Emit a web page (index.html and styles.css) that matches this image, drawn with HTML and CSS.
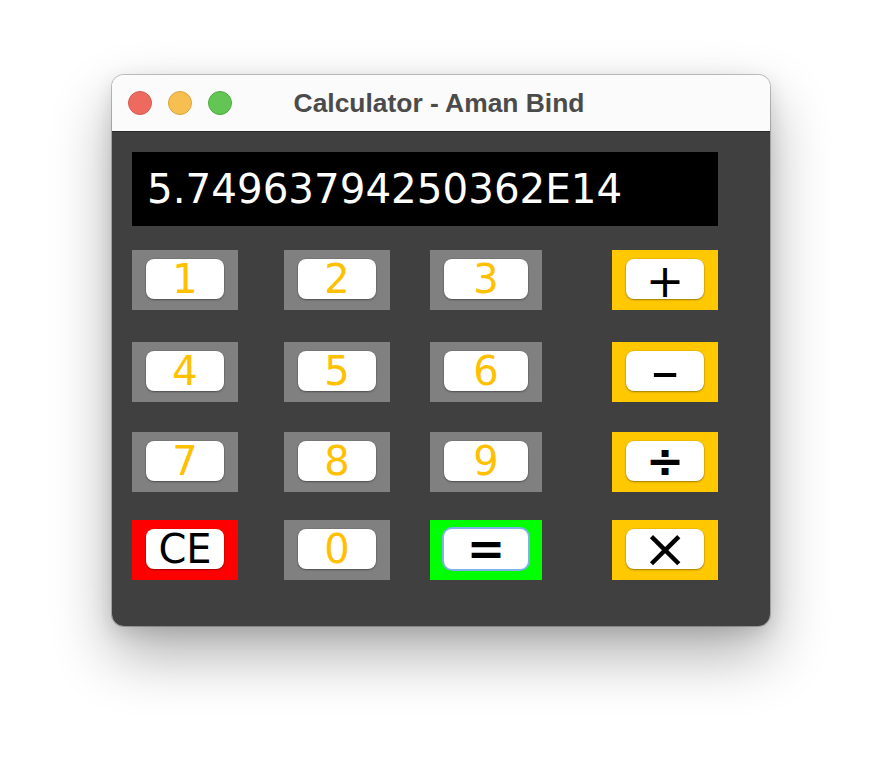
FILE: index.html
```html
<!DOCTYPE html>
<html lang="en">
<head>
<meta charset="utf-8">
<title>Calculator - Aman Bind</title>
<link rel="stylesheet" href="styles.css">
</head>
<body>
<div class="window">
  <div class="titlebar">
    <div class="lights">
      <span class="light red"></span>
      <span class="light yellow"></span>
      <span class="light green"></span>
    </div>
    <div class="title">Calculator - Aman Bind</div>
  </div>
  <div class="content">
    <div class="display">5.74963794250362E14</div>
    <div class="keypad">
      <div class="key gray r1 c1"><button class="btn num">1</button></div>
      <div class="key gray r1 c2"><button class="btn num">2</button></div>
      <div class="key gray r1 c3"><button class="btn num">3</button></div>
      <div class="key orange r1 c4"><button class="btn op plus">+</button></div>

      <div class="key gray r2 c1"><button class="btn num">4</button></div>
      <div class="key gray r2 c2"><button class="btn num">5</button></div>
      <div class="key gray r2 c3"><button class="btn num">6</button></div>
      <div class="key orange r2 c4"><button class="btn op"><span class="minus">-</span></button></div>

      <div class="key gray r3 c1"><button class="btn num">7</button></div>
      <div class="key gray r3 c2"><button class="btn num">8</button></div>
      <div class="key gray r3 c3"><button class="btn num">9</button></div>
      <div class="key orange r3 c4"><button class="btn op divide">÷</button></div>

      <div class="key red r4 c1"><button class="btn op ce">CE</button></div>
      <div class="key gray r4 c2"><button class="btn num">0</button></div>
      <div class="key lime r4 c3"><button class="btn op equals focus">=</button></div>
      <div class="key orange r4 c4"><button class="btn op times">×</button></div>
    </div>
  </div>
</div>
</body>
</html>
```

FILE: styles.css
```css
html, body {
  margin: 0;
  padding: 0;
  background: #ffffff;
}

body {
  width: 882px;
  height: 774px;
  overflow: hidden;
  padding-top: 75px;
  box-sizing: border-box;
}

.window {
  width: 658px;
  height: 551px;
  margin: 0 auto;
  border-radius: 12px;
  overflow: hidden;
  display: flex;
  flex-direction: column;
  box-shadow: 0 0 0 1px rgba(0, 0, 0, 0.22), 0 28px 60px rgba(0, 0, 0, 0.32), 0 6px 20px rgba(0, 0, 0, 0.12);
}

.titlebar {
  height: 56px;
  background: #fbfbfb;
  border-bottom: 1px solid #2a2a2a;
  display: flex;
  align-items: center;
  position: relative;
  flex: none;
}

.lights {
  display: flex;
  gap: 16px;
  padding-left: 16px;
}

.light {
  width: 24px;
  height: 24px;
  border-radius: 50%;
  box-sizing: border-box;
}

.light.red { background: #ee6a5f; border: 1px solid #d65a50; }
.light.yellow { background: #f6bf4f; border: 1px solid #d9a43e; }
.light.green { background: #62c554; border: 1px solid #52a944; }

.title {
  position: absolute;
  left: 0;
  right: 0;
  top: 0;
  bottom: 0;
  display: flex;
  align-items: center;
  justify-content: center;
  padding-right: 4px;
  font-family: "Liberation Sans", Arial, sans-serif;
  font-weight: bold;
  font-size: 26.4px;
  color: #4b4b4b;
  pointer-events: none;
}

.content {
  flex: 1;
  background: #404040;
  padding: 20px 0 0 20px;
}

.display {
  width: 586px;
  height: 74px;
  background: #000000;
  color: #ffffff;
  font-family: "DejaVu Sans", sans-serif;
  font-size: 40.4px;
  line-height: 74px;
  padding-left: 15px;
  box-sizing: border-box;
  white-space: nowrap;
}

.keypad {
  margin-top: 24px;
  display: grid;
  grid-template-columns: 106px 46px 106px 40px 112px 70px 106px;
  grid-template-rows: 60px 32px 60px 30px 60px 28px 60px;
}

.r1 { grid-row: 1; }
.r2 { grid-row: 3; }
.r3 { grid-row: 5; }
.r4 { grid-row: 7; }
.c1 { grid-column: 1; }
.c2 { grid-column: 3; }
.c3 { grid-column: 5; }
.c4 { grid-column: 7; }

.key {
  padding: 9px 14px 11px;
  box-sizing: border-box;
  display: flex;
}

.key.gray { background: #808080; }
.key.orange { background: #ffc800; }
.key.red { background: #ff0000; }
.key.lime { background: #00ff00; }

.btn {
  flex: 1;
  margin: 0;
  padding: 0;
  border: none;
  border-radius: 8px;
  background: #ffffff;
  box-shadow: 0 1px 2px rgba(0, 0, 0, 0.35), 0 0 0 0.5px rgba(0, 0, 0, 0.12);
  font-family: "DejaVu Sans", sans-serif;
  font-size: 40px;
  line-height: 40px;
  height: 40px;
  text-align: center;
  overflow: visible;
  display: flex;
  align-items: center;
  justify-content: center;
}

.btn.num { color: #ffc000; }
.btn.op { color: #000000; }
.btn.plus { font-size: 46px; padding-top: 4px; }
.btn.divide { font-size: 46px; font-weight: bold; }
.btn.equals { font-size: 46px; font-weight: bold; }
.btn.times { font-size: 54px; }

.minus {
  display: inline-block;
  font-size: 50px;
  transform: scaleX(1.7);
  padding-top: 1px;
}

.btn.focus {
  box-shadow: 0 0 0 2px #7fb2e8, 0 1px 2px rgba(0, 0, 0, 0.3);
}
```
